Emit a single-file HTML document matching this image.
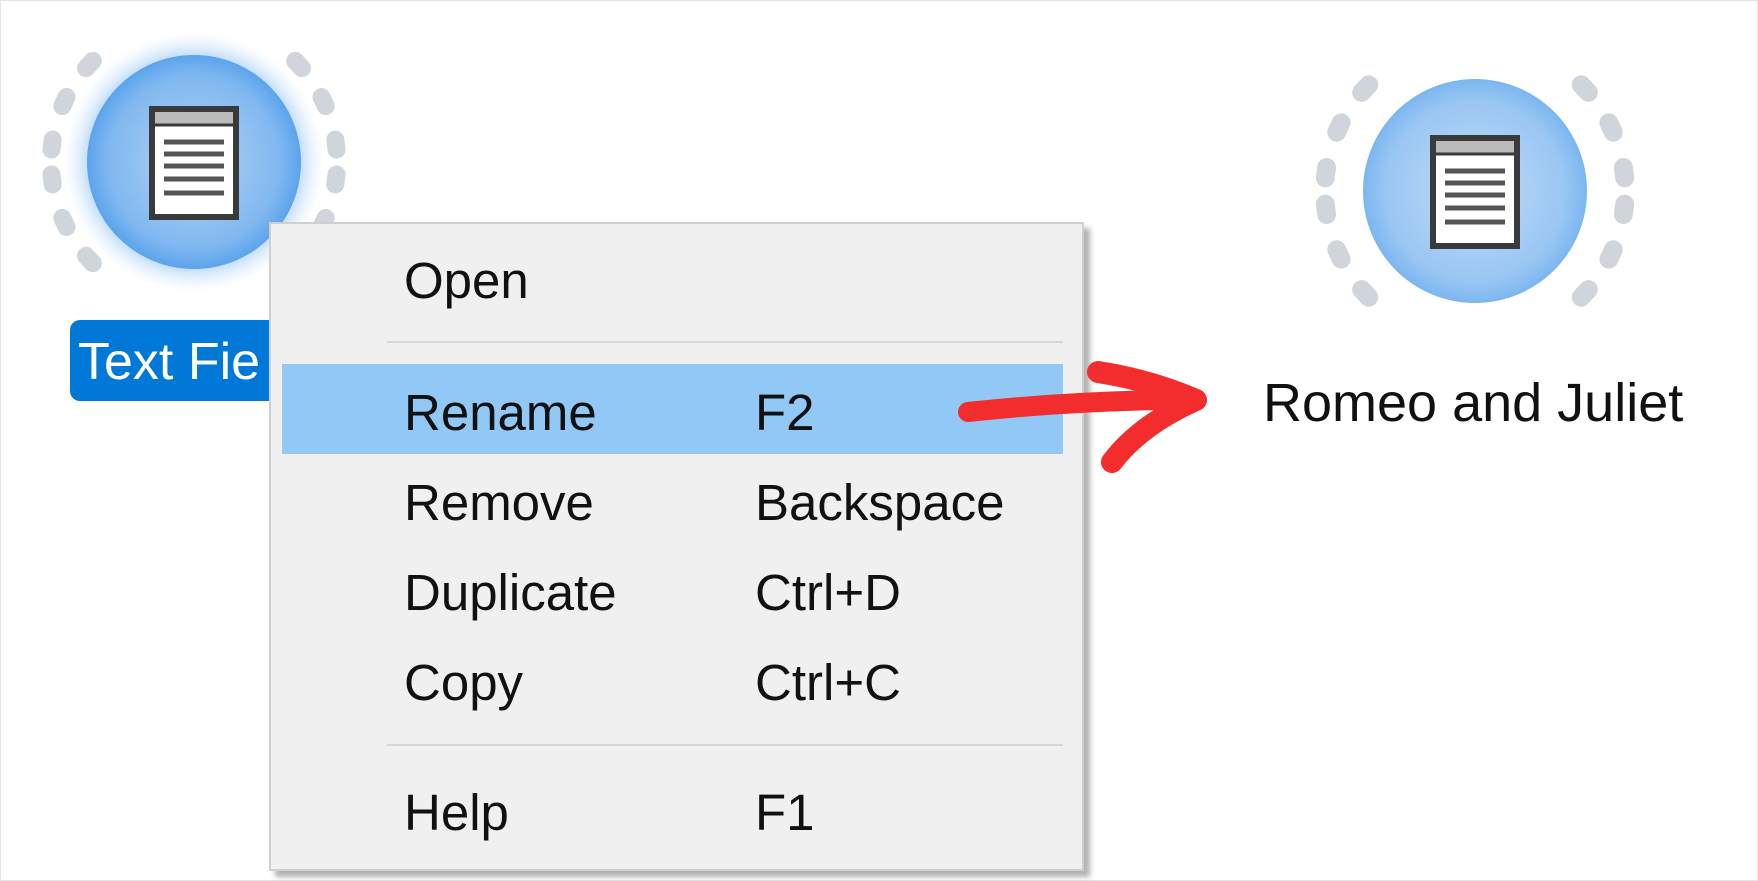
<!DOCTYPE html>
<html><head><style>
body{margin:0;width:1758px;height:881px;background:#fff;position:relative;overflow:hidden;font-family:"Liberation Sans",sans-serif}
.frame{position:absolute;left:0;top:0;width:1756px;height:879px;border:1px solid #e4e4e8}
.menu{position:absolute;left:269px;top:222px;width:811px;height:645px;background:#f0f0f0;border:2px solid #cfcfcf;box-shadow:6px 6px 5px rgba(0,0,0,.3)}
.it{position:absolute;left:133px;font-size:51px;color:#111;line-height:1}
.sc{position:absolute;left:484px;font-size:51px;color:#111;line-height:1}
.sep{position:absolute;left:116px;width:676px;height:2px;background:#d6d6d6}
</style></head><body>
<div class="frame"></div>
<svg width="1758" height="881" style="position:absolute;left:0;top:0">
<defs>
<radialGradient id="g" cx="50%" cy="50%" r="50%"><stop offset="0" stop-color="#b4d4f4"/><stop offset="0.8" stop-color="#80b8f0"/><stop offset="1" stop-color="#5ba4ec"/></radialGradient>
<radialGradient id="glow" cx="50%" cy="50%" r="50%"><stop offset="0.75" stop-color="#8ec0f2" stop-opacity=".9"/><stop offset="1" stop-color="#d8e9fb" stop-opacity="0"/></radialGradient>
<g id="doc">
<rect x="-42" y="-53" width="84" height="108" fill="#fff" stroke="#3a3a3a" stroke-width="6"/>
<rect x="-39" y="-50" width="78" height="12" fill="#bbb"/>
<line x1="-39" y1="-37" x2="39" y2="-37" stroke="#3a3a3a" stroke-width="3"/>
<g stroke="#555" stroke-width="5"><line x1="-30" y1="-20" x2="30" y2="-20"/><line x1="-30" y1="-8" x2="30" y2="-8"/><line x1="-30" y1="4" x2="30" y2="4"/><line x1="-30" y1="17" x2="30" y2="17"/><line x1="-30" y1="31" x2="30" y2="31"/></g>
</g>
<g id="dots1" stroke="#cfd5da" stroke-width="18" stroke-linecap="round">
<line x1="143" y1="-5" x2="143" y2="5" transform="rotate(7)"/><line x1="143" y1="-5" x2="143" y2="5" transform="rotate(-7)"/>
<line x1="143" y1="-5" x2="143" y2="5" transform="rotate(25)"/><line x1="143" y1="-5" x2="143" y2="5" transform="rotate(-25)"/>
<line x1="143" y1="-5" x2="143" y2="5" transform="rotate(43)"/><line x1="143" y1="-5" x2="143" y2="5" transform="rotate(-43)"/>
<line x1="143" y1="-5" x2="143" y2="5" transform="rotate(173)"/><line x1="143" y1="-5" x2="143" y2="5" transform="rotate(187)"/>
<line x1="143" y1="-5" x2="143" y2="5" transform="rotate(155)"/><line x1="143" y1="-5" x2="143" y2="5" transform="rotate(205)"/>
<line x1="143" y1="-5" x2="143" y2="5" transform="rotate(137)"/><line x1="143" y1="-5" x2="143" y2="5" transform="rotate(223)"/>
</g>
</defs>
<use href="#dots1" transform="translate(194,162)"/>
<circle cx="194" cy="162" r="130" fill="url(#glow)"/>
<circle cx="194" cy="162" r="107" fill="url(#g)"/>
<use href="#doc" x="194" y="162"/>
<use href="#dots1" transform="translate(1475,191) scale(1.05)"/>
<circle cx="1475" cy="191" r="112" fill="url(#g)" opacity=".8"/>
<use href="#doc" x="1475" y="191"/>
</svg>
<div style="position:absolute;left:70px;top:320px;width:220px;height:81px;background:#0078d7;border-radius:10px"></div>
<div style="position:absolute;left:78px;top:336px;font-size:52px;color:#fff;line-height:1">Text Fie</div>
<div style="position:absolute;left:1263px;top:376px;font-size:54px;color:#111;line-height:1">Romeo and Juliet</div>
<div class="menu">
<div class="it" style="top:31px">Open</div>
<div class="sep" style="top:117px"></div>
<div style="position:absolute;left:11px;top:140px;width:781px;height:90px;background:#91c8f5"></div>
<div class="it" style="top:163px">Rename</div><div class="sc" style="top:163px">F2</div>
<div class="it" style="top:253px">Remove</div><div class="sc" style="top:253px">Backspace</div>
<div class="it" style="top:343px">Duplicate</div><div class="sc" style="top:343px">Ctrl+D</div>
<div class="it" style="top:433px">Copy</div><div class="sc" style="top:433px">Ctrl+C</div>
<div class="sep" style="top:520px"></div>
<div class="it" style="top:563px">Help</div><div class="sc" style="top:563px">F1</div>
</div>
<svg width="1758" height="881" style="position:absolute;left:0;top:0">
<path d="M968 412 Q1060 402 1160 400" fill="none" stroke="#f32d2d" stroke-width="20" stroke-linecap="round"/>
<path d="M1098 372 Q1150 380 1196 400 Q1140 425 1112 462" fill="none" stroke="#f32d2d" stroke-width="22" stroke-linecap="round" stroke-linejoin="round"/>
</svg>
</body></html>
